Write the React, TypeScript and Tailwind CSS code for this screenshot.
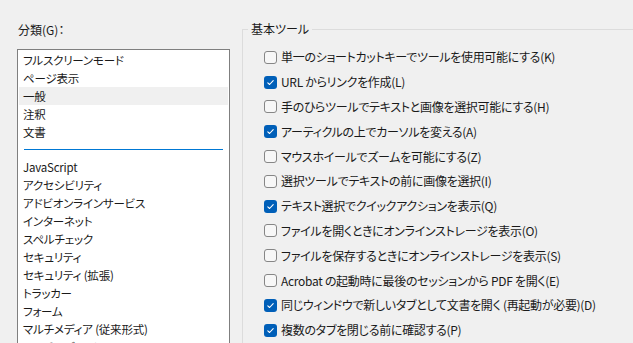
import React from 'react';

interface Option {
  label: string;
  checked: boolean;
}

const categoriesTop = ['フルスクリーンモード', 'ページ表示', '一般', '注釈', '文書'];

const categoriesBottom = [
  'JavaScript',
  'アクセシビリティ',
  'アドビオンラインサービス',
  'インターネット',
  'スペルチェック',
  'セキュリティ',
  'セキュリティ (拡張)',
  'トラッカー',
  'フォーム',
  'マルチメディア (従来形式)',
  'マルチメディアと 3D',
];

const options: Option[] = [
  { label: '単一のショートカットキーでツールを使用可能にする(K)', checked: false },
  { label: 'URL からリンクを作成(L)', checked: true },
  { label: '手のひらツールでテキストと画像を選択可能にする(H)', checked: false },
  { label: 'アーティクルの上でカーソルを変える(A)', checked: true },
  { label: 'マウスホイールでズームを可能にする(Z)', checked: false },
  { label: '選択ツールでテキストの前に画像を選択(I)', checked: false },
  { label: 'テキスト選択でクイックアクションを表示(Q)', checked: true },
  { label: 'ファイルを開くときにオンラインストレージを表示(O)', checked: false },
  { label: 'ファイルを保存するときにオンラインストレージを表示(S)', checked: false },
  { label: 'Acrobat の起動時に最後のセッションから PDF を開く(E)', checked: false },
  { label: '同じウィンドウで新しいタブとして文書を開く (再起動が必要)(D)', checked: true },
  { label: '複数のタブを閉じる前に確認する(P)', checked: true },
];

const Checkbox = ({ checked }: { checked: boolean }) =>
  checked ? (
    <span className="w-[13px] h-[13px] rounded-[3px] bg-[#005fb8] flex items-center justify-center shrink-0">
      <svg width="9" height="9" viewBox="0 0 9 9" fill="none">
        <path d="M1.8 4.8 L3.6 6.5 L7.2 2.6" stroke="white" strokeWidth="1.1" strokeLinecap="round" strokeLinejoin="round" />
      </svg>
    </span>
  ) : (
    <span className="w-[13px] h-[13px] rounded-[3px] border border-[#868686] bg-[#f7f7f7] shrink-0" />
  );

const App = () => {
  return (
    <div
      className="w-[633px] h-[343px] bg-[#f0f0f0] overflow-hidden flex text-[12px] text-[#1a1a1a] leading-[18px]"
      style={{ fontFamily: '"Noto Sans CJK JP", "Noto Sans", sans-serif', fontFeatureSettings: '"palt"' }}
    >
      <div className="w-[230px] shrink-0 pl-[17px] pt-[21px] flex flex-col">
        <div className="pl-px">分類(G)：</div>
        <div className="mt-[10px] flex-1 bg-white border border-[#7f7f7f] border-b-0 pt-[1px] px-px overflow-hidden text-[11.5px] tracking-[-0.2px]">
          {categoriesTop.map((c, i) => (
            <div key={c} className={`h-[18px] pl-[4px] relative ${i === 2 ? 'bg-[#f0f0f0]' : ''}`}>
              {c}
              {i === 1 && <span className="absolute left-[3px] bottom-[-1px] w-[28px] h-px bg-[#0078d4]" />}
            </div>
          ))}
          <div className="h-[17px] pt-[8px] px-[5px]">
            <div className="h-px w-full bg-[#0078d4]" />
          </div>
          {categoriesBottom.map((c) => (
            <div key={c} className="h-[18px] pl-[4px]">
              {c}
            </div>
          ))}
        </div>
      </div>

      <fieldset className="ml-[12px] mt-[20px] flex-1 border border-[#dcdcdc] border-r-0 border-b-0 pl-[21px]">
        <legend className="-ml-[16px] px-[3px]">基本ツール</legend>
        <div className="flex flex-col mt-[7px] tracking-[-0.3px]">
          {options.map((o) => (
            <label key={o.label} className="h-[24.8px] flex items-center gap-[4px] whitespace-nowrap">
              <Checkbox checked={o.checked} />
              <span>{o.label}</span>
            </label>
          ))}
        </div>
      </fieldset>
    </div>
  );
};

export default App;
